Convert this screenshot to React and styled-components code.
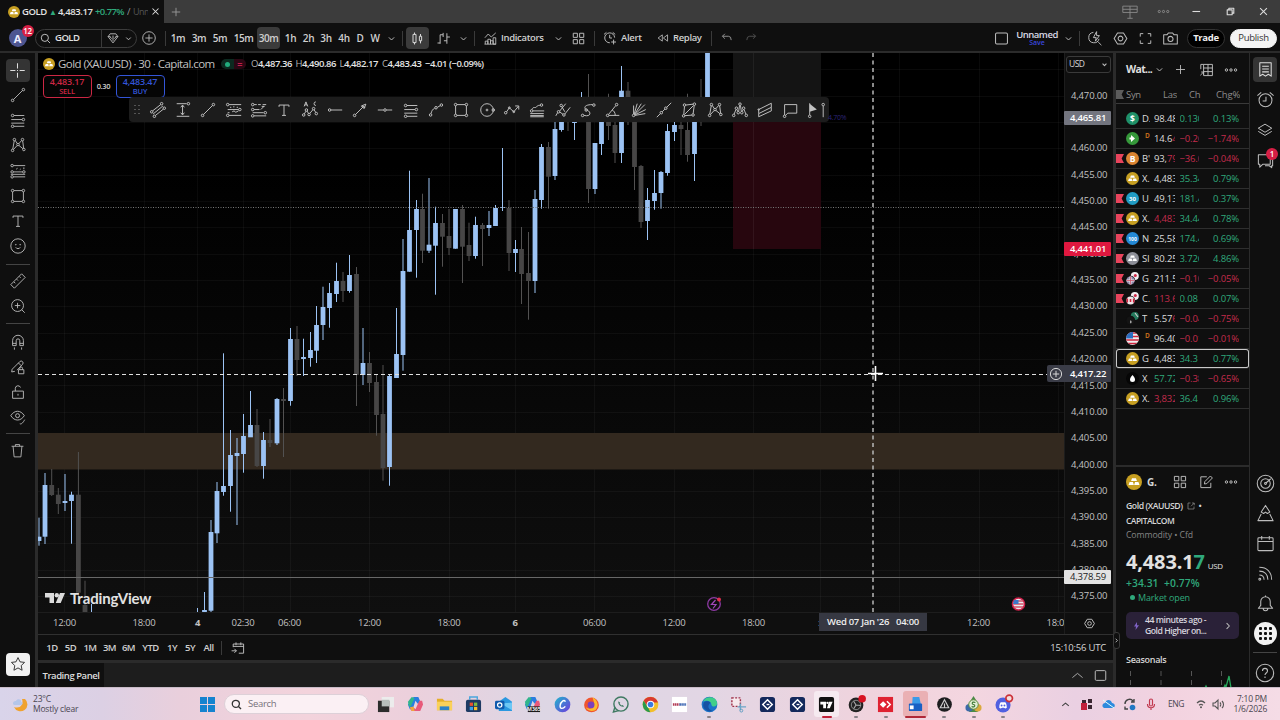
import React from "react";
import styled, { createGlobalStyle } from "styled-components";

const Global = createGlobalStyle`
  *, *::before, *::after { box-sizing: border-box; }
  body { margin: 0; background: #0f0f0f; overflow: hidden; }
`;

const UP = "#2fa97c";
const DOWN = "#c42c4d";

/* ---------- frame ---------- */
const Window = styled.div`
  width: 1280px; height: 720px; display: flex; flex-direction: column;
  background: #0f0f0f; color: #d6d6d6; overflow: hidden; white-space: nowrap;
  font-family: "Open Sans", "Noto Sans", sans-serif; font-size: 10px; line-height: 1;
`;
const TabBar = styled.div`
  height: 23px; display: flex; align-items: center; background: #3c3c3c; flex: none;
`;
const Tab = styled.div`
  width: 164px; height: 23px; background: #0f0f0f; display: flex; align-items: center;
  padding-left: 8px; font-size: 10px; font-weight: 600; color: #e2e2e2; flex: none;
`;
const Toolbar = styled.div`
  height: 28px; flex: none; display: flex; align-items: center; padding-top: 2px; background: #0f0f0f;
`;
const HRule = styled.div`height: ${p => p.$h || 1}px; background: ${p => p.$c || "#2b2b2b"}; flex: none;`;
const VRule = styled.div`width: 3px; background: #2b2b2b; flex: none;`;
const Body = styled.div`height: 634px; display: flex; flex: none;`;
const Cell = styled.div`
  width: ${p => p.$w}px; height: ${p => p.$h || 22}px; margin-left: ${p => p.$ml || 0}px; flex: none;
  display: flex; align-items: center; justify-content: ${p => p.$align || "center"};
  border-radius: 4px; background: ${p => (p.$on ? "#3b3b3b" : "transparent")};
  font-size: ${p => p.$fs || 10}px; font-weight: 600; letter-spacing: ${p => p.$ls ?? -0.3}px;
  color: ${p => p.$color || "#cfcfcf"};
`;
const Bar = styled.div`width: 1px; height: ${p => p.$h || 15}px; background: #3a3a3a; flex: none; margin-left: ${p => p.$ml || 0}px;`;
const Spacer = styled.div`flex: 1;`;
const Text = styled.span`
  font-size: ${p => p.$fs || 10}px; color: ${p => p.$c || "inherit"}; font-weight: ${p => p.$fw || "inherit"};
  letter-spacing: ${p => p.$ls ?? -0.2}px; margin-left: ${p => p.$ml || 0}px;
`;
const TabText = styled.span`
  width: ${p => p.$w}px; flex: none; overflow: hidden; color: ${p => p.$c || "inherit"}; font-weight: ${p => p.$fw || 600};
  font-size: ${p => p.$fs || 9.5}px; line-height: 14px; letter-spacing: ${p => p.$ls ?? -0.45}px;
`;
const Avatar = styled.div`
  width: 18px; height: 18px; border-radius: 50%; background: #4d5591; color: #eef; position: relative;
  display: flex; align-items: center; justify-content: center; font-size: 11px; font-weight: 700;
`;
const Badge = styled.span`
  position: absolute; right: ${p => p.$r}px; top: ${p => p.$t}px; width: 12px; height: 12px; border-radius: 50%;
  background: #d61f45; color: #fff; font-size: 8px; font-weight: 600; letter-spacing: -0.2px;
  display: flex; align-items: center; justify-content: center;
`;
const SearchPill = styled.div`
  width: 102px; height: 19px; border: 1px solid #3c3c3c; border-radius: 10px; display: flex; align-items: center;
`;
const Pill = styled.div`
  width: ${p => p.$w}px; height: 19px; border-radius: 10px; margin-left: ${p => p.$ml}px;
  display: flex; align-items: center; justify-content: center; font-size: 9.5px; letter-spacing: -0.3px;
  font-weight: ${p => (p.$light ? 500 : 700)};
  background: ${p => (p.$light ? "#f4f4f4" : "#000")}; color: ${p => (p.$light ? "#333" : "#eee")};
  border: 1px solid ${p => (p.$light ? "#f4f4f4" : "#333")};
`;
const LayoutName = styled.div`
  width: 46px; display: flex; flex-direction: column; align-items: center; font-size: 9.5px; font-weight: 600;
  letter-spacing: -0.5px; color: #d8d8e4;
  small { font-size: 7px; color: #3a46dc; line-height: 7px; letter-spacing: -0.1px; }
`;

/* ---------- icons ---------- */
const n = (x, y, r = 1.4) => `M${x - r} ${y}a${r} ${r} 0 1 0 ${2 * r} 0a${r} ${r} 0 1 0 ${-2 * r} 0`;
const Glyph = styled.svg`display: block; flex: none; overflow: visible;`;
function Icon({ name, s = 20, w = 1, c = "#bdbdbd" }) {
  return (
    <Glyph width={s} height={s} viewBox="0 0 20 20" fill="none" stroke={c} strokeWidth={w} strokeLinejoin="round">
      <path d={ICONS[name]} />
    </Glyph>
  );
}
const ICONS = {
  cross: "M10 1.5v6M10 12.5v6M1.5 10h6M12.5 10h6M9.4 10h1.2",
  line: n(4, 16) + n(16, 4) + "M5 15L15 5",
  fib: n(4, 5) + n(16, 9.5) + n(4, 17) + "M5.5 5H17M2.5 9.5h12M2.5 13.5H17M5.5 17H17",
  xabcd: n(4, 16) + n(6, 4) + n(10, 9.5) + n(15, 4) + n(16.5, 15) + "M4.2 14.6L5.8 5.4M7 5l2.2 3.4M11 8.5l3-3.5M15.2 5.4l1.1 8.2M5 15l4-4.4M11 10.5l4.5 3.6",
  forecast: n(3.5, 4) + n(3.5, 11) + n(16.5, 11) + n(3.5, 16.5) + "M5 4H18M5 11h10M5 16.500H18M2 13.700h16M8 8l1.500-1M12 8.500l1-.7M16.500 6v2",
  rect: n(4, 4) + n(16, 4) + n(4, 16) + n(16, 16) + "M5.4 4h9.2M5.4 16h9.2M4 5.4v9.2M16 5.4v9.2",
  text: "M4.5 6.5V4.5h11v2M10 4.5v11.5M7.8 16h4.4",
  smile: n(10, 10, 8) + n(7.6, 8.6, 0.4) + n(12.4, 8.6, 0.4) + "M7.5 11.5c.7 1.9 4.3 1.9 5 0",
  ruler: "M2 14L14 2l4 4L6 18zM5.5 11l1.5 1.5M8.5 8L10 9.5M11.5 5l1.5 1.5",
  zoomin: n(9.5, 9.5, 6.6) + "M9.5 6.5v6M6.5 9.5h6M14 14l3.5 3.5",
  magnet: "M4 14V8.5a6 6 0 0 1 12 0V14h-4V8.5a2 2 0 0 0-4 0V14zM4 11.5h4M12 11.5h4M6 16V18.5M14 16V18.5",
  pencillock: "M3 15.5l.5-3L12 4a1.8 1.8 0 0 1 3 3l-6 6.5M3 15.5l3.5-.7M10.5 5.5l3 3M10.5 13h6v4.5h-6zM12 13v-1.5a1.5 1.5 0 0 1 3 0V13",
  lock: "M4 9h12v8H4zM7 9V6a3 3 0 0 1 5.8-1M10 12v2",
  eye: "M2 8.5C6 2 13 2 17 8.5 13 15 6 15 2 8.5z" + n(9.5, 8.5, 2.2) + "M12 17.5c2 1 4-2 5.5-4.5",
  trash: "M3 5h14M7.5 5V3h5v2M4.8 5l1.2 12.5h8L15.2 5",
  star: "M10 2l2.5 5.3 5.7.7-4.2 4 1.1 5.8L10 14.9l-5.1 2.9L6 12 1.8 8l5.7-.7z",
  chev: "M6.5 8.5L10 12l3.5-3.5",
  up: "M4 12.5l6-5 6 5",
  right: "M8 6l4 4-4 4",
  plus: "M10 4v12M4 10h12",
  circplus: n(10, 10, 7) + "M10 6v8M6 10h8",
  x: "M6 6l8 8M14 6l-8 8",
  search: n(9, 9, 5.5) + "M13 13l4 4",
  diamond: "M3 8l3-4h8l3 4-7 9zM6 8.5l2 2.5M10 6.5V14M14 8.5l-2 2.5M3 8h3.5M13.5 8H17",
  candles: "M4 4.5h4v11H4zM6 4.5V2M6 15.5V18M12.5 7h3v6h-3zM14 7V4M14 13v3.5",
  bars: "M5.5 17V5M2 16H5.5M5.5 5h4V2.5M14.5 3v14M10.5 13H14.5M14.5 8h4M9.5 5v3",
  indicators: "M2.5 9l4.5-5 4 4 6-5.5M3 17.5v-4h3.5v4M6.5 17.5V11H10v6.5M10 17.5V13h3.5v4.5M13.5 17.5V9H17v8.5zM2 17.5h15.5",
  grid: "M3 3h5.5v5.5H3zM11.5 3H17v5.5h-5.5zM3 11.5h5.5V17H3zM11.5 11.5H17V17h-5.5z",
  alertplus: "M15.8 9.5a6.2 6.2 0 1 0-6 6.5M9.6 6v4H12.5M2.5 5.5L5.5 3M13.5 3l3 2.5M14.5 12v6M11.5 15h6",
  alarm: n(10, 10.8, 6.8) + "M10.5 7v4.5H7M1.5 6l4-3.5M18.5 6l-4-3.5",
  replay: "M9 5.5L3 10l6 4.5zM16.5 5.5l-6 4.5 6 4.5z",
  undo: "M7 4L3.5 7.5 7 11M3.5 7.5H12q4 0 4 5.5",
  redo: "M13 4l3.5 3.5L13 11M16.5 7.5H8q-4 0-4 5.5",
  square: "M4.5 3.5h11q1.5 0 1.5 1.5v10q0 1.5-1.5 1.5h-11Q3 16.5 3 15V5q0-1.5 1.5-1.5z",
  boltsearch: "M8 3a6.5 6.5 0 1 0 7 8M14 15l4 4M12 2L8 9.5h3.5L10.5 14l5-7H12z",
  gear: "M6.5 3.5h7L17.5 10l-4 6.5h-7L2.5 10z" + n(10, 10, 2.8),
  full: "M3 7.5V3.5h4M13 3.5h4v4M17 12.5v4h-4M7 16.5H3v-4",
  camera: "M2 5.5h4l1.5-2h5L14 5.5h4v11H2z" + n(10, 10.5, 3),
  chan: n(3, 12) + n(6, 17) + n(14, 3) + n(17, 8) + "M4 11l9-7M7.2 16L16 9M4.5 14.5L15.5 5.5",
  measure: "M3 3h11M3 17h14M9.5 5v10M7.5 7l2-2.5 2 2.5M7.5 13l2 2.5 2-2.5" + n(16, 3),
  longpos: n(3, 4) + n(3, 16) + n(16.5, 9.5) + "M4.5 4H18M3 9.5h12M4.5 16H18M3 13h2M8 12l2-1 2 1.5 3-1.5M5.5 7h1.5M9 6.5h1.5M13 7h1.5",
  fcst: n(3, 4) + n(3, 9.5) + n(17, 13) + n(3, 16.5) + "M4.5 4h3M9 4h3M14 4h4M4.5 9.5h6M12 9.5l4-4M4.5 16.5H18M3 13h12M13 6h3",
  wave: n(3, 15.5) + n(6, 10) + n(9, 15) + n(14, 8.5) + n(17, 14) + "M3.7 14.3L5.5 11.3M6.8 11.2L8.3 13.8M9.8 13.8L13.2 9.7M14.6 9.8L16.4 12.7M3.5 6L5.5 1l2 5M4.3 4.3h2.5M16.5 1a2 2 0 1 0 0 4",
  ray: n(4, 10) + "M5.5 10H18",
  arrow: n(4, 16) + "M5 15l9-9M11.5 5.5L16.5 3.5l-2 5zM12.5 5.5l2 2M13 4.8l2.5 2.5",
  hline: n(10, 10) + "M2 10h6.5M11.5 10H18",
  curve: n(4, 15.5) + n(10, 7.5) + n(16, 4.5) + "M4.5 14c.5-3 2-5 4-6M11.5 7l3-1.7",
  circle: n(10, 10, 7) + n(10, 10, 1) + n(17, 10),
  zig: n(3, 13) + "M4 12l3-4.5 5 4.5 5-6M13.5 5.5h4V9.5" + n(7, 7.5, 1) + n(12, 12, 1),
  flat: n(4, 11) + n(15, 4.5) + "M5.5 11H18M2.5 14h15M2.5 16.2h15M2.5 17.5h15M4.5 9.5c1-4 4-1 5-3s3-1.5 4-1.7",
  pitch: n(8, 5) + n(5, 12) + n(11, 15.5) + "M2 16.500L4 13M6.200 11.300L13 3M8.700 6.300L12 12M6.500 12.300l3.500 2.500M12 14.500L18 7",
  scurve: n(4, 16) + n(8, 10) + n(16.5, 4.5) + "M5.5 16c8 2 8-4 4-5.5S4 4 15 4",
  angle: n(4, 16) + n(14, 4) + "M5 15l8-9.8M5.5 16H17M9 10c2 .8 3.5 3 3.5 6",
  fan: n(4, 16) + "M4 14.5V5M4.7 14.5L8 3M5 15l7.5-12M5.5 15L16.5 4M5.5 15.5l12-6M5.5 16L17 14",
  ext: n(7, 13) + n(12, 8) + "M2 18l4-4M8 12l3-3M13 7l5-5",
  para: n(5, 4.5) + n(16, 3.5) + n(4, 16.5) + n(14.5, 15.5) + "M6.5 4.5l8-1M15.8 5l-1.2 9M13 15.7l-7.5.6M4.2 15L5 6M5 15L15 5",
  peaks: n(3, 16) + n(6, 8) + n(10, 3.5) + n(14, 8) + n(17, 16) + n(8, 13) + n(12, 13) + "M3.5 14.5l2-5M6.5 9.5l1 2M8.5 11.5l1-6.5M10.5 5l1 6.5M12.5 11.5l1-2M14.5 9.5l2 5",
  bands: "M3 9.5L17 2.5M17 2.5V7M3 9.5V14M3 14L17 7M17 7v4M3 14v3.5L17 11" + n(3, 9.5, 0.8),
  callout: n(4, 17) + "M4 15.5V4h13.5v9.5H7.5L5 16",
  dots: n(3.5, 10, 1.7) + n(10, 10, 1.7) + n(16.5, 10, 1.7),
  table: "M7 3h11v14H7zM7 7.5h11M7 12h11M12.5 3v14M3.5 9V3H7M7 12.5l-4 4M4 12.5h3v3.5",
  list: "M4 3h12v14l-3-2-3 2-3-2-3 2zM6.5 6.5h7M6.5 9.5h7M6.5 12.5h7",
  layers: "M10 3.5l7.5 4.5-7.5 4.5L2.5 8zM2.5 11.5l7.5 4.5 7.5-4.5",
  chat: "M2.5 4h12.5v10H7L4 17V14H2.5zM15 7.5h2.5V15.5h-1v2L14 15.5H9.5",
  target: n(10, 10, 8.7) + n(10, 10, 5) + n(10, 10, 1) + "M10.8 9.2L15.5 5",
  idea: "M10 1.5l4.5 7-2.5 1.5-2-1.5L8 10 5.5 8.5zM5.5 10.500L2 17.500h16L14.500 10.500",
  cal: "M3 4h14a1 1 0 0 1 1 1V16.5a1 1 0 0 1-1 1H3a1 1 0 0 1-1-1V5a1 1 0 0 1 1-1zM2 8h16M6 2v4M14 2v4",
  rss: n(4, 16, 1) + "M3.5 11.5c3 0 5 2 5 5M3.5 7.5c5.5 0 9 3.5 9 9M3.5 3.5c8 0 13 5 13 13",
  bell: "M2.5 15h15l-2.5-3V8a5 5 0 0 0-10 0V12zM7.5 15c0 3.5 5 3.5 5 0M10 3V1.5",
  help: n(10, 10, 8.7) + "M7.5 8c0-3.5 5-3.5 5 0 0 2-2.5 2-2.5 4M10 13.5v1.5",
  edit: "M11 3.5H3.5V17H16v-6M8 12.5l.5-3L15.5 2.5l2.5 2.5-7 7z",
  goto: "M4 9V5h13v11.5h-6M4 8h13M7.5 3v3.5M13.5 3v3.5M2 13.5h6M5.5 11l2.5 2.5L5.5 16",
  ext2: "M9 4H4v12h12v-5M12 4h4.5v4.5M16.5 4L10 10.5",
  panels: "M2 3.5h16v7H2zM10 3.5V17M7 17h6M2 7h16",
  restore: "M4 7h9v9H4zM7 7V4h9v9h-3",
  min: "M1 10h17",
};

const Gold = ({ s = 12, c = "#c79f22" }) => (
  <Glyph width={s} height={s} viewBox="0 0 12 12">
    <circle cx="6" cy="6" r="6" fill={c} />
    <path d="M4.5 3.2h3l.7 2H3.8zM2.7 6h2.5l.7 2.3H1.9zM6.8 6h2.5l.8 2.3h-4z" fill="#fff" />
  </Glyph>
);

/* ---------- left rail ---------- */
const Rail = styled.div`width: 35px; display: flex; flex-direction: column; align-items: center; flex: none; padding-top: 5px;`;
const RailItem = styled.div`
  height: ${p => p.$h || 25.3}px; width: 35px; display: flex; align-items: center; justify-content: center; flex: none;
`;
const RailOn = styled.div`
  width: 24px; height: 23px; border-radius: 4px; background: ${p => p.$bg || "#343434"};
  display: flex; align-items: center; justify-content: center;
`;
const RailRule = styled.div`width: 24px; height: 1px; background: #444; margin: ${p => p.$m || "4px 0"}; flex: none;`;

/* ---------- chart ---------- */
const Center = styled.div`width: 1075px; display: flex; flex-direction: column; flex: none;`;
const PlotRow = styled.div`display: flex; height: 559px; flex: none;`;
const Plot = styled.div`width: 1026px; height: 559px; position: relative; flex: none; overflow: hidden; background: linear-gradient(#000 20%, #0f0f0f);`;
const PlotSvg = styled.svg`position: absolute; inset: 0; display: block;`;
const Legend = styled.div`position: relative; display: flex; align-items: center; height: 14px; margin: 4px 0 0 5px;`;
const Title = styled.span`width: 157px; margin-left: 3px; flex: none; font-size: 11.5px; font-weight: 500; letter-spacing: -0.56px; color: #c2c2c2;`;
const Status = styled.div`
  width: 25px; height: 10px; margin: 0 5px 0 6px; border-radius: 5px; display: flex; align-items: center; justify-content: space-around;
  background: linear-gradient(90deg, #0c2a20 50%, #2b0714 50%); color: #c01f4c; font-size: 9px; font-weight: 700; flex: none;
  i { width: 5px; height: 5px; border-radius: 50%; background: #22ab7d; }
`;
const Ohlc = styled.span`
  width: ${p => p.$w}px; flex: none; font-size: 9.5px; font-weight: 600; letter-spacing: -0.48px; color: #e4e4e4;
  b { font-weight: 400; color: #b0b0b0; }
`;
const Quote = styled.div`position: relative; display: flex; align-items: center; margin: 4px 0 0 4.5px;`;
const QuoteBox = styled.div`
  width: 49px; height: 23px; border: 1px solid ${p => p.$c}; border-radius: 4px; background: #050505; color: ${p => p.$c};
  display: flex; flex-direction: column; align-items: center; padding-top: 1px;
  font-size: 9px; line-height: 10px; letter-spacing: -0.15px; font-weight: 600;
  small { font-size: 7.5px; line-height: 8px; letter-spacing: -0.2px; font-weight: 600; }
`;
const Spread = styled.span`width: 24px; text-align: center; font-size: 7.5px; color: #ccc; font-weight: 600; letter-spacing: -0.3px;`;
const Favs = styled.div`
  position: absolute; left: 91px; top: 44px; width: 700px; height: 25px; border-radius: 4px; background: #1c1c1c;
  display: flex; align-items: center;
`;
const FavCell = styled.div`width: ${p => p.$w || 25.32}px; display: flex; align-items: center; justify-content: center; flex: none;`;
const GripDots = styled.div`
  display: grid; grid-template-columns: 1.5px 1.5px; gap: 2.5px;
  i { width: 1.5px; height: 1.5px; background: #555; }
`;
const EntryNote = styled.span`position: absolute; left: 790px; top: 61px; font-size: 7px; color: #2c2478; letter-spacing: -0.3px;`;
const Brand = styled.div`
  position: absolute; left: 7px; top: 538px; display: flex; align-items: center; gap: 5px; color: #e2e2e2;
  font-family: "Lato", "Open Sans", sans-serif; font-size: 15px; font-weight: 700; letter-spacing: -0.15px;
`;
const PriceAxis = styled.div`width: 49px; position: relative; flex: none; border-left: 1px solid #1d1d1d; display: flex; flex-direction: column; padding-top: 29.3px;`;
const Tick = styled.div`height: 26.35px; display: flex; align-items: center; padding-left: 6px; font-size: 9.5px; letter-spacing: -0.15px; color: #c2c2c2; flex: none; font-weight: 500;`;
const Currency = styled.div`
  position: absolute; left: 1px; top: 3px; width: 45px; height: 17px; border: 1px solid #3a3a3a; border-radius: 3px;
  display: flex; align-items: center; justify-content: space-between; padding-left: 2px; font-size: 8.5px; letter-spacing: -0.5px; color: #d8d8d8;
`;
const PriceTag = styled.div`
  position: absolute; left: -1px; top: ${p => p.$y}px; width: 47px; height: ${p => p.$h || 14}px; padding-left: 6px; border-radius: 1px;
  background: ${p => p.$bg}; color: ${p => p.$c || "#fff"}; display: flex; align-items: center; font-size: 9.5px; letter-spacing: -0.2px; font-weight: ${p => p.$fw || 600};
`;
const AddMark = styled.div`
  position: absolute; left: -18px; top: 312px; width: 18px; height: 17px; background: #3a3c47; border-radius: 2px 0 0 2px;
  display: flex; align-items: center; justify-content: center;
`;
const TimeAxis = styled.div`height: 22px; position: relative; border-top: 1px solid #1d1d1d; display: flex; flex: none;`;
const TimeTrack = styled.div`width: 1026px; position: relative; overflow: hidden; flex: none;`;
const TimeTick = styled.span`
  position: absolute; left: ${p => p.$x - 38}px; top: 5px; transform: translateX(-50%); font-size: 9.5px; letter-spacing: -0.25px;
  color: #c2c2c2; font-weight: ${p => (p.$b ? 700 : 500)};
`;
const TimeTag = styled.div`
  position: absolute; left: 781px; top: 0; width: 108px; height: 18px; background: #363842; color: #eee;
  display: flex; align-items: center; justify-content: center; gap: 7px; font-size: 9.5px; font-weight: 600; letter-spacing: -0.3px;
`;
const AxisGear = styled.div`width: 49px; border-left: 1px solid #1d1d1d; display: flex; align-items: center; justify-content: center;`;
const RangeRow = styled.div`height: 25px; display: flex; align-items: center; flex: none; padding: 0 7px 0 5px;`;
const PanelRow = styled.div`height: 24px; display: flex; align-items: center; background: #1d1d1d; flex: none; padding-right: 1px;`;
const PanelTab = styled.div`
  width: 66px; height: 24px; background: #0f0f0f; display: flex; align-items: center; justify-content: center;
  font-size: 9.5px; font-weight: 600; letter-spacing: -0.45px; color: #ddd; padding-top: 1px;
`;

/* x, body top, body bottom, high, low, rising */
const CANDLES = [
  [39, 536.7, 541, 517.7, 545.7, 1], [45, 485, 536.7, 473, 544, 1], [51.7, 485, 495, 469, 496, 0], [58.3, 494.7, 504, 488, 514, 0],
  [65, 501, 503, 474, 511, 1], [71.5, 494.7, 501, 491.7, 543.7, 1], [78.4, 494.7, 592.7, 452, 603, 0], [85, 605, 613, 580.7, 613, 0],
  [91.5, 613, 613, 604, 613, 1], [197.5, 613, 613, 608, 613, 1], [204.5, 610, 613, 592, 613, 1], [211, 532, 610.7, 520, 612, 1],
  [217, 491, 533.3, 482, 543, 1], [223.5, 486, 492, 353.3, 495.7, 1], [230.5, 455, 486, 430, 511.7, 1], [237, 453, 456, 438, 525, 1],
  [243.5, 436, 454, 414, 472.7, 1], [250.5, 425, 437.3, 391, 437, 1], [257, 425, 466, 409, 467, 0], [263.5, 440, 466, 432, 478.7, 1],
  [270, 440, 443, 419, 447, 0], [277, 399, 443.3, 398, 445, 1], [283.5, 399, 401, 388, 457, 0], [290.5, 339, 401, 328, 405.7, 1],
  [297, 339, 360, 326, 376, 0], [303.5, 357, 359, 338.7, 376, 1], [310.5, 350, 358, 332, 366.7, 1], [316.5, 325, 350.7, 306, 363, 1],
  [323, 307, 325, 286.7, 340, 1], [329.5, 293, 308, 283, 327.7, 1], [336.5, 281, 294, 262.7, 302, 1], [343, 281, 291, 272, 302, 0],
  [349.5, 275, 291, 255, 292.7, 1], [356.5, 274, 375, 267, 406, 0], [363, 363, 375, 328, 385, 1], [369.5, 363, 383, 352, 392, 0],
  [376.5, 382, 415, 375, 435.7, 0], [383, 414, 468, 365, 480.7, 0], [389.5, 376, 467, 374, 485.7, 1], [396.5, 354, 378, 308, 378, 1],
  [403, 271, 355, 239, 370.7, 1], [409.5, 230, 271.7, 170.7, 271.7, 1], [416.5, 209, 230, 200, 277.7, 1], [422.5, 209, 250.7, 193.7, 263, 0],
  [429, 244.7, 250.7, 178, 253, 1], [435.5, 223, 245.7, 206.7, 294.7, 1], [442.5, 223, 236.7, 214, 266.7, 0], [449, 236, 248, 209, 255, 0],
  [455.5, 209, 248.7, 209, 248.7, 1], [462.5, 209, 246.7, 205, 283, 0], [469, 245, 256, 222.7, 261, 0], [475.5, 225, 256, 216.7, 258.7, 1],
  [482.5, 225, 229, 223, 266, 0], [489, 225, 228, 211, 236, 1], [495.5, 208, 226, 205, 226, 1], [502.5, 207, 208, 148, 211, 1],
  [509, 208, 253, 200, 271, 0], [515.5, 249, 253, 240, 272, 1], [521.5, 249, 274, 227, 304, 0], [528.5, 273, 281, 232, 319.7, 0],
  [535, 199, 281, 190, 293, 1], [541.5, 147, 200, 144, 208.7, 1], [548.5, 147, 176.7, 142, 208.7, 0], [555, 129, 176, 122, 180, 1],
  [561.5, 105, 130, 105, 131.7, 1], [568, 105, 112, 105, 131, 0], [574.5, 105, 123, 105, 140, 1], [581.5, 105, 110, 92, 112, 1],
  [588.5, 105, 189, 74, 203, 0], [595, 143, 189, 143, 194, 1], [601.5, 110, 144, 110, 155, 1], [608.5, 110, 126, 93.7, 140, 0],
  [615, 125, 153, 115, 163, 0], [621.5, 90.7, 153, 66, 163, 1], [628, 90.7, 115, 82, 125, 0], [634.5, 110, 167, 110, 190, 0],
  [641, 166, 222, 165, 228, 0], [647.5, 200, 221, 188, 240, 1], [654.5, 193, 201, 170, 209.7, 1], [661, 172, 193, 171, 208.7, 1],
  [667.5, 131, 173, 124, 175.7, 1], [674.5, 125, 132, 120, 141, 1], [681, 125, 129, 120, 155, 0], [687.5, 130, 155, 93.7, 161.7, 0],
  [694.5, 110, 154, 110, 181, 1], [701, 110, 112, 79, 126, 0], [707.5, 53, 114, 53, 114, 1],
];
const GRID_X = [64.5, 144, 197.5, 243, 290, 369.5, 449, 515, 594.5, 674, 753.5, 820, 899, 979, 1058];
const PRICES = Array.from({ length: 20 }, (_, i) => 4470 - i * 5);
const money = v => `4,${v - 4000}.00`;

function Chart() {
  return (
    <PlotSvg width="1026" height="559" viewBox="38 53 1026 559">
      <g stroke="#fff" strokeOpacity="0.04">
        {GRID_X.map(x => <path key={x} d={`M${Math.floor(x) + 0.5} 53V612`} />)}
        {[-1, ...PRICES.keys()].map(i => <path key={i} d={`M38 ${Math.round(95.5 + i * 26.35) + 0.5}H1064`} />)}
      </g>
      <rect x="733" y="53" width="88" height="67" fill="#141414" />
      <rect x="733" y="120" width="88" height="129" fill="#27060e" />
      <path d="M753.5 53V249" stroke="#fff" strokeOpacity="0.06" />
      <rect x="38" y="433" width="1026" height="36.5" fill="#33291f" />
      {CANDLES.map(([x, t, b, h, l, up]) => (
        <g key={x} fill={up ? "#9cc3f4" : "#474646"}>
          <rect x={x - 0.5} y={h} width="1" height={l - h} fill={up ? "#9cc3f4" : "#525151"} />
          <rect x={x - 2.4} y={t} width="4.8" height={b - t} />
        </g>
      ))}
      <path d="M38 207.5H1064" stroke="#777" strokeDasharray="1 1.5" />
      <path d="M38 577.5H1064" stroke="#686868" />
      <path d="M38 374.5H1064" stroke="#e0e0e0" strokeDasharray="4 3" />
      <path d="M873 53V612" stroke="#b8b8b8" strokeWidth="1.5" strokeDasharray="4 3.5" />
      <path d="M875.5 366v15M868 373.5h15" stroke="#fff" strokeWidth="1.6" />
      <circle cx="714" cy="604" r="6.3" fill="none" stroke="#8d3aa3" strokeWidth="1.3" />
      <path d="M715.5 600l-4 4.5h4.5l-3 4" fill="none" stroke="#a048b8" strokeWidth="1.2" />
      <circle cx="719" cy="599.5" r="2" fill="#e0304f" />
      <circle cx="1018.5" cy="604" r="6" fill="#e9e9ef" stroke="#d0204a" strokeWidth="1.6" />
      <path d="M1013.5 604h10M1014 607h9M1018 601h5" stroke="#d3546a" strokeWidth="1.3" />
      <path d="M1014 600h4.5v4h-5.5z" fill="#3b78c8" />
    </PlotSvg>
  );
}

function FlagMeasure() {
  return (
    <Glyph width="18" height="18" viewBox="0 0 20 20" fill="none" stroke="#c2c2c2" strokeWidth="1.05">
      <path d={n(3, 17) + "M3 15.5V2.5"} />
      <path d="M3 3l8 6.5L3 12z" fill="#c2c2c2" stroke="none" />
      <path d={n(18, 4) + "M18 5.5V18"} />
    </Glyph>
  );
}
const FAVS = ["chan", "measure", "line", "longpos", "fcst", "text", "wave", "ray", "arrow", "hline", "fib", "curve", "rect", "circle", "zig", "flat", "pitch", "scurve", "angle", "fan", "ext", "para", "xabcd", "peaks", "bands", "callout"];
const TIMES = [[64.5, "12:00"], [144, "18:00"], [197.5, "4", 1], [243, "02:30"], [289.5, "06:00"], [369.5, "12:00"], [449, "18:00"], [515, "6", 1], [594.5, "06:00"], [674, "12:00"], [753.5, "18:00"], [819, ":"], [978.5, "12:00"], [1058, "18:00"]];
const RANGES = [["1D", 18], ["5D", 19], ["1M", 20], ["3M", 19], ["6M", 19], ["YTD", 25], ["1Y", 18], ["5Y", 18], ["All", 19]];

/* ---------- right panel ---------- */
const Side = styled.div`width: 133px; display: flex; flex-direction: column; flex: none; position: relative;`;
const SideHead = styled.div`height: 33px; display: flex; align-items: center; padding-left: 10px; flex: none;`;
const ListName = styled.span`width: 24px; font-size: 10.5px; font-weight: 700; letter-spacing: -0.65px; color: #dedede;`;
const Cols = styled.div`height: 18px; display: flex; align-items: center; border-bottom: 1px solid #3a3a3a; margin-bottom: 5px; color: #8c8c8c; font-size: 9.5px; letter-spacing: -0.3px; flex: none;`;
const Row = styled.div`
  height: 20px; display: flex; align-items: center; flex: none;
  border-bottom: 1px solid #2e2e2e; box-shadow: ${p => (p.$on ? "0 0 0 1px #c9c9c9 inset" : "none")}; border-radius: ${p => (p.$on ? 3 : 0)}px;
`;
const FlagMark = styled.div`
  width: 8px; height: 9px; margin-right: 2px; flex: none; background: ${p => p.$c};
  clip-path: polygon(0 0, 100% 0, 70% 50%, 100% 100%, 0 100%);
`;
const Clip = styled.div`
  width: ${p => p.$w}px; margin-left: ${p => p.$ml}px; overflow: hidden; flex: none; font-size: 9.5px; line-height: 14px; height: 14px;
  letter-spacing: ${p => p.$ls ?? -0.15}px; color: ${p => p.$c || "#dcdcdc"}; text-align: ${p => p.$a || "left"}; font-weight: ${p => p.$fw || 500};
`;
const Tail = styled.span`color: ${p => p.$c || "inherit"};`;
const Delay = styled.span`display: block; color: #c06a1c; font-size: 6.5px; line-height: 8px; margin-left: 3px; font-weight: 700;`;
const Detail = styled.div`padding: 3px 10px 0; display: flex; flex-direction: column; height: 220px; overflow: hidden;`;
const Line = styled.div`
  display: flex; align-items: center; height: ${p => p.$h}px; margin-top: ${p => p.$mt || 0}px; font-size: ${p => p.$fs || 9}px; color: ${p => p.$c || "#d6d6d6"};
  font-weight: ${p => p.$fw || 500}; letter-spacing: ${p => p.$ls ?? -0.3}px; gap: ${p => p.$gap ?? 3}px; flex: none;
`;
const DetailSymbol = styled.span`width: 10px; margin-left: 5px; font-size: 10px; font-weight: 700;`;
const Unit = styled.span`font-size: 8px; font-weight: 500; letter-spacing: -0.4px; padding-top: 8px;`;
const OpenDot = styled.i`width: 5px; height: 5px; border-radius: 50%; background: ${UP}; margin-left: 4px;`;
const News = styled.div`
  margin-top: 5px; width: 113px; height: 27px; flex: none; border-radius: 5px; background: #2a2138; display: flex; align-items: center; padding-left: 8px;
  p { margin: 0 0 0 6px; font-size: 8.7px; line-height: 10.5px; font-weight: 600; letter-spacing: -0.5px; width: 76px; color: #d5d2dc; }
`;
const Handle = styled.div`
  position: absolute; left: -3px; top: 579px; width: 7px; height: 17px; border: 1px solid #3a3a3a; border-radius: 3px; background: #0f0f0f;
  display: flex; align-items: center; justify-content: center;
`;
const RightRail = styled.div`width: 31px; border-left: 1px solid #2b2b2b; display: flex; flex-direction: column; align-items: center; flex: none; padding-top: 2px;`;
const RailBtn = styled.div`
  position: relative; width: 24px; height: ${p => p.$h || 24}px; margin-top: ${p => p.$mt || 0}px; border-radius: 4px; flex: none;
  background: ${p => (p.$on ? "#343434" : "transparent")}; display: flex; align-items: center; justify-content: center;
`;
const Apps = styled.div`
  width: 23px; height: 23px; border-radius: 50%; background: #f2f2f2; display: grid; grid-template-columns: repeat(3, 3px);
  gap: 2px; place-content: center; flex: none; i { width: 3px; height: 3px; background: #111; border-radius: 1px; }
`;

const Coin = ({ kind }) => {
  if (kind === "gold") return <Gold s={13} />;
  if (kind === "silver") return <Gold s={13} c="#8d8f98" />;
  const fills = { usd: "#1f9169", green: "#35983a", btc: "#db8432", n30: "#219cc4", n100: "#2489d6" };
  if (fills[kind]) return (
    <Glyph width="13" height="13" viewBox="0 0 13 13">
      <circle cx="6.5" cy="6.5" r="6.5" fill={fills[kind]} />
      {kind === "green"
        ? <path d="M5 3l4 3.5L5 10V7.5H3.5v-2H5z" fill="#fff" />
        : <text x="6.5" y={kind === "n100" || kind === "n30" ? 8.6 : 9.5} fontSize={kind === "n100" ? 5 : kind === "n30" ? 6 : 8.5} fontWeight="700" letterSpacing="0" textAnchor="middle" fill="#fff">{{ usd: "$", btc: "B", n30: "30", n100: "100" }[kind]}</text>}
    </Glyph>
  );
  if (kind === "us") return (
    <Glyph width="13" height="13" viewBox="0 0 13 13">
      <clipPath id="us"><circle cx="6.5" cy="6.5" r="6.5" /></clipPath>
      <g clipPath="url(#us)"><rect width="13" height="13" fill="#eee" /><path d="M0 1h13M0 4.5h13M0 8h13M0 11.5h13" stroke="#d0243f" strokeWidth="1.7" /><rect width="7" height="6.5" fill="#2b6fc2" /></g>
    </Glyph>
  );
  if (kind === "oil") return (
    <Glyph width="13" height="13" viewBox="0 0 13 13"><circle cx="6.5" cy="6.5" r="6.5" fill="#060606" /><path d="M6.5 3c2 2.5 2.5 3.5 2.5 4.6a2.5 2.5 0 0 1-5 0C4 6.5 4.5 5.5 6.5 3z" fill="#fff" /></Glyph>
  );
  const dark = kind === "tn";
  return (
    <Glyph width="13" height="13" viewBox="0 0 13 13">
      <circle cx="8.8" cy="4" r="4" fill={dark ? "#247a5d" : "#f2eef0"} />
      {!dark && <circle cx="9.3" cy="3.5" r="1.5" fill="#cf2a48" />}
      <circle cx="4.5" cy="8.3" r="4.6" fill="#0f0f0f" />
      <circle cx="4.5" cy="8.5" r="4" fill={dark ? "#141414" : kind === "gb" ? "#8d86a8" : "#f0e8ea"} />
      {kind === "gb" && <path d="M4.5 4.5v8M.5 8.5h8" stroke="#f0e4ea" strokeWidth="2" />}
      {kind === "gb" && <path d="M4.5 4.5v8M.5 8.5h8" stroke="#c8506a" strokeWidth="0.8" />}
      {kind === "ca" && <path d="M1.3 6.5v4M7.7 6.5v4M4.5 7v3" stroke="#d0243f" strokeWidth="1.6" />}
      {dark && <path d="M4.5 8.5a2 2 0 0 1 0 2.5M9 1l3 4" stroke="#c9c9c9" strokeWidth="1.2" fill="none" />}
    </Glyph>
  );
};
/* flagged, coin, symbol, delayed, last, last tail, change, percent, rising, last colour, tail colour */
const ROWS = [
  [0, "usd", "D.", 0, "98.4", "8", "0.130", "0.13%", 1],
  [0, "green", "", 1, "14.6", "4", "−0.26", "−1.74%", 0, "", DOWN],
  [1, "btc", "B'", 0, "93,", "79", "−36.0", "−0.04%", 0, "", DOWN],
  [0, "gold", "X.", 0, "4,48", "3", "35.34", "0.79%", 1],
  [1, "n30", "U", 0, "49,1", "3", "181.4", "0.37%", 1],
  [1, "gold", "X.", 0, "4,48", "3", "34.44", "0.78%", 1, DOWN],
  [1, "n100", "N", 0, "25,5", "8", "174.4", "0.69%", 1],
  [1, "silver", "SI", 0, "80.2", "5", "3.726", "4.86%", 1],
  [1, "gb", "G", 0, "211.", "5", "−0.10", "−0.05%", 0],
  [1, "ca", "C.", 0, "113.", "6", "0.08", "0.07%", 1, DOWN],
  [0, "tn", "T", 0, "5.57", "6", "−0.04", "−0.75%", 0, "", DOWN],
  [0, "us", "", 1, "96.4", "0", "−0.01", "−0.01%", 0],
  [0, "gold", "G", 0, "4,48", "3", "34.3", "0.77%", 1],
  [0, "oil", "X", 0, "57.7", "2", "−0.38", "−0.65%", 0, UP],
  [0, "gold", "X.", 0, "3,83", "2", "36.4", "0.96%", 1, DOWN],
];

/* ---------- taskbar ---------- */
const Taskbar = styled.div`
  height: 33px; flex: none; display: flex; align-items: center; color: #4a4650; border-top: 1px solid #c9bcc8;
  background: linear-gradient(90deg, #d9d4ea 0, #dcd0e4 8%, #e9cfdc 14%, #f3d3dc 24%, #ecd0dc 32%, #ddd6e4 42%, #e2d6e4 55%, #f0d3dd 68%, #f4d6e0 76%, #ead0e2 84%, #f3d3e0 92%, #f5dce6 100%);
`;
const Weather = styled.div`width: 187px; padding-left: 12px; display: flex; align-items: center; gap: 5px; font-size: 8.5px; line-height: 10.5px; letter-spacing: -0.2px; margin-right: 8px; flex: none;`;
const TaskSearch = styled.div`
  width: 145px; height: 20px; margin: 0 2px 0 5px; border-radius: 10px; background: #fbf0f4; border: 1px solid #ddd0d8; flex: none;
  display: flex; align-items: center; padding-left: 5px; gap: 5px; font-size: 9.5px; letter-spacing: -0.3px; color: #77707a;
`;
const AppSlot = styled.div`
  width: 29.41px; height: 28px; flex: none; display: flex; flex-direction: column; align-items: center; justify-content: center; position: relative;
  &::after { content: ""; position: absolute; bottom: 0; height: 2px; border-radius: 1px; width: ${p => p.$uw || 0}px; background: ${p => p.$u || "transparent"}; }
`;
const AppTile = styled.div`
  width: 25px; height: 26px; border-radius: 3px; background: ${p => p.$bg || "transparent"}; display: flex; align-items: center; justify-content: center;
`;
const Tray = styled.div`width: ${p => p.$w}px; display: flex; align-items: center; justify-content: center; font-size: 8.5px; letter-spacing: -0.4px; flex: none;`;
const ClockBox = styled.div`width: 54px; padding-right: 13px; text-align: right; font-size: 8.5px; line-height: 10.5px; letter-spacing: -0.25px; flex: none;`;

const APP_ART = {
  task: <><rect x="5" y="1" width="13" height="11" fill="#ececec" /><rect x="1" y="5" width="12" height="12" fill="#2c2c2c" /><rect x="5" y="4" width="8" height="7" fill="#b7bebc" /></>,
  copilot: <><path d="M7 1h5l3 7h-4L9 5 6 14H3L1 9z" fill="#2a7de0" /><path d="M1 6l4-5 3 1-4 9H2z" fill="#31b58c" /><path d="M9 14l4-9h3l1 4-3 7H5l-2-3h5z" fill="#e8597a" /><path d="M3 12l4-1 1 5H5z" fill="#f0a63c" /></>,
  folder: <><path d="M1 3h6l2 2h8v10H1z" fill="#e5ae27" /><rect x="1" y="6" width="16" height="9" fill="#fad15a" /><rect x="4" y="11" width="10" height="4" fill="#2d83c8" /></>,
  store: <><rect x="1" y="4" width="16" height="13" rx="2" fill="#1e3a63" /><path d="M5 4V1h8v3" fill="none" stroke="#4aa6dd" strokeWidth="1.5" /><path d="M5 7h3.5v3.5H5z" fill="#e85030" /><path d="M9.5 7H13v3.5H9.5z" fill="#7cba42" /><path d="M5 11.5h3.5V15H5z" fill="#3aa0e8" /><path d="M9.5 11.5H13V15H9.5z" fill="#f5bd2c" /></>,
  outlook: <><path d="M4 6l7-5 7 5v10H4z" fill="#2b98e0" /><path d="M6 8l12 7V7z" fill="#6cc7f4" /><rect x="0" y="5" width="10" height="9" rx="1.5" fill="#0f5aad" /><circle cx="5" cy="9.5" r="2.3" fill="none" stroke="#fff" strokeWidth="1.3" /></>,
  canva: <><defs><linearGradient id="cv" x1="0" y1="0" x2="1" y2="1"><stop offset="0" stopColor="#1fb8cc" /><stop offset="1" stopColor="#7037dc" /></linearGradient></defs><circle cx="9" cy="9" r="8.3" fill="url(#cv)" /><path d="M12 6c-1-3-5 0-5.500 4s3 4 5.500 1" fill="none" stroke="#fff" strokeWidth="1.5" /></>,
  firefox: <><circle cx="9" cy="9.5" r="7.8" fill="#f0552e" /><path d="M10 1c5 3 8 9 3 14-5 2-9 0-10-3 4 3 9 1 9-4z" fill="#fbb92e" /><circle cx="8.5" cy="9.5" r="3.6" fill="#7b40bd" /></>,
  whatsapp: <><circle cx="9.5" cy="8.5" r="7.5" fill="none" stroke="#3f7a62" strokeWidth="1.5" /><path d="M3 12L1.5 17 7 15.5" fill="none" stroke="#3f7a62" strokeWidth="1.5" /><path d="M6.8 5.5c-1 3 3 7 6 5.5l-1.5-1.5-1.2.6-2-2 .6-1z" fill="#3f7a62" /></>,
  chrome: <><circle cx="9" cy="9" r="8.3" fill="#f3bf2a" /><path d="M1.8 5a8.3 8.3 0 0 1 15 2H9L6 11z" fill="#d93a30" /><path d="M1.8 5l5 8 2 4.3A8.3 8.3 0 0 1 1.8 5z" fill="#2a9a4c" /><circle cx="9" cy="9" r="4" fill="#fff" /><circle cx="9" cy="9" r="3" fill="#3a7be0" /></>,
  white: <><rect x="1" y="1" width="16" height="16" fill="#fff" /><path d="M2 9h7" stroke="#b33a55" strokeWidth="2.5" strokeDasharray="1.5 .5" /><path d="M9 9h7" stroke="#3560b0" strokeWidth="2.5" strokeDasharray="1.5 .5" /></>,
  edge: <><circle cx="9" cy="9" r="8.3" fill="#1b74c9" /><path d="M2 6C5-1 17 0 17 8c0 4-6 4-6 1 0-4-6-5-9-3z" fill="#41cf8a" /><path d="M3 7c-3 6 4 11 10 9-5-1-7-5-3-9-2-2-5-2-7 0z" fill="#1552a4" /></>,
  snip: <><path d="M2 2h9v9H2z" fill="#f6e8ec" stroke="#a03048" strokeWidth="1.5" strokeDasharray="2 1.5" /><path d="M11 8v7M8 11.5h9" stroke="#6aa5c8" strokeWidth="1.5" /><circle cx="12" cy="15.5" r="1.5" fill="none" stroke="#5f9cc0" /></>,
  blue: <><rect x="1" y="1" width="16" height="16" rx="3" fill="#14295c" /><path d="M9 4l5 5-5 5-5-5z" fill="none" stroke="#fff" strokeWidth="1.6" /><path d="M8 9h3" stroke="#fff" strokeWidth="1.4" /></>,
  tv: <><rect x="1" y="1" width="16" height="16" rx="2" fill="#111" /><path d="M2.5 6h6v7H5.5V9h-3zM11.5 6H15.5l-3 7H9.5z" fill="#fff" /><circle cx="10" cy="7.3" r="1.2" fill="#fff" /></>,
  obs: <><circle cx="8.5" cy="9.5" r="7.8" fill="#222" /><circle cx="8.5" cy="9.5" r="5" fill="none" stroke="#8c8c8c" strokeWidth="1" /><path d="M8.5 9.5L6 5.5M8.5 9.5l5 .5M8.5 9.5L6 13.5" stroke="#aaa" strokeWidth="1.2" /><circle cx="15" cy="3" r="4" fill="#d81222" /></>,
  red: <><rect x="1" y="1" width="16" height="16" fill="#df2232" /><path d="M6.5 5.5L10 9l-3.5 3.5L3 9z" fill="#fff" /><path d="M10.5 5.5L14 9l-3.5 3.5" fill="none" stroke="#fff" strokeWidth="1.6" /></>,
  phone: <><path d="M6 1h7l3 14H5z" fill="#3b9be8" /><rect x="2" y="8" width="14" height="8" rx="1" fill="#1860c4" /><rect x="3" y="10" width="4" height="4" fill="#fff" /></>,
  arc: <><circle cx="9" cy="9" r="7.8" fill="#1d1d1f" /><path d="M9 4l4.5 8.5h-9zM9 8v4" fill="none" stroke="#ccc" strokeWidth="1.2" /></>,
  money: <><path d="M9 0l8 13-4 4H5l-4-4z" fill="#4b8a46" /><circle cx="4.5" cy="12.5" r="4" fill="#3c6aa8" /><circle cx="13.5" cy="12.5" r="4" fill="#dba93c" /><circle cx="9" cy="9" r="5" fill="#e0ecd2" stroke="#5b8c3c" /><path d="M11 7c-4-2-4 2-2 2s2 4-2 2" fill="none" stroke="#407b35" strokeWidth="1.2" /></>,
  discord: <><circle cx="8.5" cy="9.5" r="8" fill="#5160e0" /><path d="M4.5 12.5c0-4 1-6 2-6h4c1 0 2 2 2 6-2 1.5-2 0-4 0s-2 1.5-4 0z" fill="#fff" /><circle cx="7" cy="10" r="1" fill="#5160e0" /><circle cx="10" cy="10" r="1" fill="#5160e0" /><circle cx="15" cy="2.5" r="3.5" fill="#f3dcdc" stroke="#cc3038" strokeWidth="1.8" /></>,
};
APP_ART.pre = <>{APP_ART.copilot}<rect x="4" y="11" width="13" height="6" fill="#1a1a1a" /><text x="10.5" y="16" fontSize="5.5" fontWeight="700" fill="#eee" letterSpacing="0" textAnchor="middle">M365</text></>;
const APPS = [["task"], ["copilot"], ["folder"], ["store"], ["outlook"], ["pre"], ["canva"], ["firefox"], ["whatsapp"], ["chrome"], ["white"], ["edge", 4], ["snip"], ["blue"], ["blue"], ["tv", 10, "#f6eaf0", "#c02038"], ["obs", 4], ["red", 4], ["phone", 21, "#eab0b4", "#b02838"], ["arc", 4], ["money", 4], ["discord", 4]];

export default function App() {
  return (
    <Window>
      <Global />
      <TabBar>
        <Tab>
          <Gold />
          <Cell $w={2} /><TabText $w={27}>GOLD</TabText><TabText $w={9} $c={UP} $fs={8}>▲</TabText>
          <TabText $w={37} $ls={-0.4}>4,483.17</TabText><TabText $w={32} $c={UP} $ls={-0.6}>+0.77%</TabText>
          <TabText $w={6} $fw={400} $c="#999">/</TabText><TabText $w={15} $fw={400} $c="#555" $fs={9} $ls={-0.5}>Unn</TabText>
          <Icon name="x" s={15} c="#ddd" w={1.4} />
        </Tab>
        <Cell $w={24}><Icon name="plus" s={14} c="#999" w={1.3} /></Cell>
        <Spacer />
        <Cell $w={32}><Icon name="panels" s={18} c="#8a8a8a" /></Cell>
        <Cell $w={34}><Icon name="dots" s={13} c="#999" w={1.2} /></Cell>
        <Cell $w={33}><Icon name="min" s={9} c="#ddd" w={2.4} /></Cell>
        <Cell $w={34}><Icon name="restore" s={11} c="#ddd" w={2} /></Cell>
        <Cell $w={33}><Icon name="x" s={17} c="#ddd" w={1.2} /></Cell>
      </TabBar>
      <Toolbar>
        <Cell $w={35}><Avatar>A<Badge $r={-7} $t={-4}>12</Badge></Avatar></Cell>
        <SearchPill>
          <Cell $w={19}><Icon name="search" s={13} w={1.5} /></Cell>
          <Cell $w={46} $align="flex-start" $color="#e2e2e2" $fs={9.5} $ls={-0.5}>GOLD</Cell>
          <Bar $h={17} /><Cell $w={22}><Icon name="diamond" s={14} w={1.3} /></Cell><Cell $w={8}><Icon name="chev" s={13} w={1.5} /></Cell>
        </SearchPill>
        <Cell $w={24}><Icon name="circplus" s={18} /></Cell>
        <Bar $ml={4} />
        <Cell $w={22} $ml={1}>1m</Cell><Cell $w={20}>3m</Cell><Cell $w={22}>5m</Cell><Cell $w={25} $ls={-0.5}>15m</Cell>
        <Cell $w={23} $ml={1} $ls={-0.5} $on>30m</Cell><Cell $w={19} $ml={1}>1h</Cell><Cell $w={17}>2h</Cell><Cell $w={18}>3h</Cell>
        <Cell $w={18}>4h</Cell><Cell $w={14}>D</Cell><Cell $w={16}>W</Cell><Cell $w={16}><Icon name="chev" s={15} w={1.3} /></Cell>
        <Bar $ml={3} />
        <Cell $w={23} $ml={3} $on><Icon name="candles" s={15} w={1.3} c="#ddd" /></Cell>
        <Cell $w={24} $ml={2}><Icon name="bars" s={15} w={1.3} /></Cell>
        <Cell $w={16}><Icon name="chev" s={15} w={1.3} /></Cell>
        <Bar $ml={3} />
        <Cell $w={16} $ml={7}><Icon name="indicators" s={15} w={1.2} /></Cell>
        <Cell $w={49} $ml={3} $align="flex-start" $fs={9.5} $ls={-0.35}>Indicators</Cell>
        <Cell $w={16}><Icon name="chev" s={15} w={1.3} /></Cell>
        <Cell $w={19} $ml={3}><Icon name="grid" s={15} w={1.3} /></Cell>
        <Bar $ml={6} />
        <Cell $w={16} $ml={7}><Icon name="alertplus" s={16} w={1.2} /></Cell>
        <Cell $w={31} $ml={3} $align="flex-start" $fs={9.5} $ls={-0.3}>Alert</Cell>
        <Cell $w={16} $ml={3}><Icon name="replay" s={14} w={1.2} /></Cell>
        <Cell $w={34} $ml={2} $align="flex-start" $fs={9.5} $ls={-0.35}>Replay</Cell>
        <Bar $ml={4} />
        <Cell $w={18} $ml={6}><Icon name="undo" s={14} w={1.3} c="#999" /></Cell>
        <Cell $w={18} $ml={6}><Icon name="redo" s={14} w={1.3} c="#555" /></Cell>
        <Spacer />
        <Cell $w={16}><Icon name="square" s={17} w={1.2} /></Cell>
        <Cell $w={5} />
        <LayoutName>Unnamed<small>Save</small></LayoutName>
        <Cell $w={16}><Icon name="chev" s={15} w={1.3} /></Cell>
        <Bar $ml={3} />
        <Cell $w={19} $ml={5}><Icon name="boltsearch" s={16} w={1.2} /></Cell>
        <Cell $w={18} $ml={7}><Icon name="gear" s={17} w={1.2} /></Cell>
        <Cell $w={18} $ml={7}><Icon name="full" s={15} w={1.3} /></Cell>
        <Cell $w={19} $ml={7}><Icon name="camera" s={17} w={1.2} /></Cell>
        <Pill $w={38} $ml={7}>Trade</Pill><Pill $w={47} $ml={5} $light>Publish</Pill><Cell $w={3} />
      </Toolbar>
      <HRule $h={2} />
      <Body>
        <Rail>
          <RailItem $h={24}><RailOn><Icon name="cross" s={17} w={1.2} c="#ddd" /></RailOn></RailItem>
          {["line", "fib", "xabcd", "forecast", "rect", "text", "smile"].map(k => <RailItem key={k}><Icon name={k} s={18} /></RailItem>)}
          <RailRule $m="4.9px 0 3.5px" />
          <RailItem><Icon name="ruler" s={18} /></RailItem><RailItem><Icon name="zoomin" s={18} /></RailItem>
          <RailRule $m="4px 0 5px" />
          {["magnet", "pencillock", "lock", "eye"].map(k => <RailItem key={k} $h={25}><Icon name={k} s={18} /></RailItem>)}
          <RailRule $m="4px 0 4px" />
          <RailItem><Icon name="trash" s={17} /></RailItem>
          <Spacer />
          <RailItem $h={46}><RailOn $bg="#f1f1f1"><Icon name="star" s={16} c="#333" w={1.2} /></RailOn></RailItem>
        </Rail>
        <VRule />
        <Center>
          <PlotRow>
            <Plot>
              <Chart />
              <Legend>
                <Gold /><Title>Gold (XAUUSD) · 30 · Capital.com</Title>
                <Status><i />=</Status>
                <Ohlc $w={44.5}><b>O</b>4,487.36</Ohlc><Ohlc $w={44}><b>H</b>4,490.86</Ohlc><Ohlc $w={42.5}><b>L</b>4,482.17</Ohlc>
                <Ohlc $w={43}><b>C</b>4,483.43</Ohlc><Ohlc $w={70}>−4.01 (−0.09%)</Ohlc>
              </Legend>
              <Quote>
                <QuoteBox $c="#cc2744">4,483.17<small>SELL</small></QuoteBox><Spread>0.30</Spread><QuoteBox $c="#3355d8">4,483.47<small>BUY</small></QuoteBox>
              </Quote>
              <Favs>
                <FavCell $w={16}><GripDots>{Array.from({ length: 6 }, (_, i) => <i key={i} />)}</GripDots></FavCell>
                {FAVS.map((k, i) => <FavCell key={i}><Icon name={k} s={18} w={1.05} c="#c6c6c6" /></FavCell>)}
                <FavCell><FlagMeasure /></FavCell>
              </Favs>
              <EntryNote>4.70%</EntryNote>
              <Brand>
                <Glyph width="20" height="11" viewBox="0 0 20 11"><path d="M0 0h9v10H4.5V4.5H0zM15 0h5l-4.3 10h-5z" fill="#dcdcdc" /><circle cx="11.8" cy="2.2" r="2.2" fill="#dcdcdc" /></Glyph>
                TradingView
              </Brand>
            </Plot>
            <PriceAxis>
              {PRICES.map(p => <Tick key={p}>{p === 4465 ? "" : money(p)}</Tick>)}
              <Currency>USD<Icon name="chev" s={11} w={2} /></Currency>
              <PriceTag $y={58} $bg="#73757f">4,465.81</PriceTag>
              <PriceTag $y={189} $bg="#e0183f">4,441.01</PriceTag>
              <PriceTag $y={312} $h={17} $bg="#3a3c47">4,417.22</PriceTag>
              <PriceTag $y={517} $bg="#e2e2e2" $c="#222" $fw={500}>4,378.59</PriceTag>
              <AddMark><Icon name="circplus" s={16} w={1.2} c="#ddd" /></AddMark>
            </PriceAxis>
          </PlotRow>
          <TimeAxis>
            <TimeTrack>
              {TIMES.map(([x, t, b]) => <TimeTick key={x} $x={x} $b={b}>{t}</TimeTick>)}
              <TimeTag><span>Wed 07 Jan '26</span><span>04:00</span></TimeTag>
            </TimeTrack>
            <AxisGear><Icon name="gear" s={13} w={1.5} /></AxisGear>
          </TimeAxis>
          <HRule $c="#303030" />
          <RangeRow>
            {RANGES.map(([t, w]) => <Cell key={t} $w={w} $fs={9.5} $ls={-0.5}>{t}</Cell>)}
            <Bar $ml={3} $h={14} /><Cell $w={31}><Icon name="goto" s={16} w={1.2} /></Cell>
            <Spacer /><Text $fw={500} $fs={9.5} $ls={-0.2}>15:10:56 UTC</Text>
          </RangeRow>
          <HRule $h={3} />
          <PanelRow>
            <PanelTab>Trading Panel</PanelTab><Spacer />
            <Cell $w={24}><Icon name="up" s={17} /></Cell><Cell $w={23}><Icon name="square" s={15} w={1.3} /></Cell>
          </PanelRow>
        </Center>
        <VRule />
        <Side>
          <SideHead>
            <ListName>Wat...</ListName><Cell $w={18}><Icon name="chev" s={15} w={1.3} /></Cell>
            <Cell $w={22} $ml={1}><Icon name="plus" s={15} w={1.2} /></Cell><Cell $w={24} $ml={3}><Icon name="table" s={16} w={1.2} /></Cell>
            <Cell $w={26}><Icon name="dots" s={14} w={1.4} /></Cell>
          </SideHead>
          <Cols><FlagMark $c="#5c5c5c" /><span>Syn</span><Clip $w={14} $ml={22} $c="#8c8c8c">Las</Clip><Clip $w={12} $ml={12} $c="#8c8c8c">Ch</Clip><Clip $w={24} $ml={15} $c="#8c8c8c" $a="right">Chg%</Clip></Cols>
          {ROWS.map((r, i) => {
            const c = r[8] ? UP : DOWN;
            return (
              <Row key={i} $on={i === 12}>
                <FlagMark $c={r[0] ? "#e8445c" : "transparent"} />
                <Coin kind={r[1]} />
                <Clip $w={8} $ml={3}>{r[3] ? <Delay>D</Delay> : r[2]}</Clip>
                <Clip $w={20.5} $ml={4} $c={r[9]}>{r[4]}<Tail $c={r[10]}>{r[5]}</Tail></Clip>
                <Clip $w={19} $ml={5} $c={c}>{r[6]}</Clip>
                <Clip $w={34} $ml={6.5} $c={c} $a="right">{r[7]}</Clip>
              </Row>
            );
          })}
          <Spacer />
          <HRule $h={2} />
          <Detail>
            <Line $h={23} $gap={0}><Gold s={16} /><DetailSymbol>G.</DetailSymbol>
              <Cell $w={24} $ml={11.5}><Icon name="grid" s={16} w={1.2} /></Cell><Cell $w={27}><Icon name="edit" s={16} w={1.2} /></Cell><Cell $w={23}><Icon name="dots" s={14} w={1.4} /></Cell></Line>
            <Line $h={26} $fw={600} $fs={8.7} $ls={-0.45}>Gold (XAUUSD) <Icon name="ext2" s={10} w={1.5} c="#888" /> •</Line>
            <Line $h={8} $fs={8.5} $ls={-0.55} $fw={600} $mt={-2}>CAPITALCOM</Line>
            <Line $h={20} $fs={8.7} $c="#858585" $ls={-0.1}>Commodity • Cfd</Line>
            <Line $h={34} $fs={20} $fw={700} $ls={-0.15} $c="#e2e2e2"><span>4,483.1<Text $c={UP} $fs={20}>7</Text></span><Unit>USD</Unit></Line>
            <Line $h={8} $fs={10.3} $fw={600} $c={UP} $ls={0.05}>+34.31&nbsp; +0.77%</Line>
            <Line $h={20} $fs={9} $c={UP} $ls={-0.15}><OpenDot />Market open</Line>
            <News>
              <Glyph width="5" height="8" viewBox="0 0 5 8"><path d="M3 0L0 4.5h2L1.5 8 5 3.3H3z" fill="#7f62c6" /></Glyph>
              <p>44 minutes ago -<br />Gold Higher on...</p><Icon name="right" s={14} w={1.5} />
            </News>
            <Line $h={24} $mt={8} $fw={600} $fs={9} $ls={-0.3}>Seasonals</Line>
            <Glyph width="113" height="19" viewBox="0 0 113 19">
              <path d="M4.5 0v19M35 0v19M65.5 0v19M95.5 0v19" stroke="#555" strokeDasharray="5 4" />
              <path d="M78 19l2-4 2 4M97 19l2-5 1 2 3-11 2 12 1 2" fill="none" stroke="#26a65b" strokeWidth="1.3" />
            </Glyph>
          </Detail>
          <Handle><Icon name="right" s={9} w={2} /></Handle>
        </Side>
        <RightRail>
          <RailBtn $on $h={25} $mt={2}><Icon name="list" s={19} w={1.1} c="#ddd" /></RailBtn>
          <RailBtn $mt={5}><Icon name="alarm" s={19} w={1.1} /></RailBtn>
          <RailBtn $mt={7}><Icon name="layers" s={18} w={1.1} /></RailBtn>
          <RailBtn $mt={6}><Icon name="chat" s={19} w={1.1} /><Badge $r={-1} $t={0}>1</Badge></RailBtn>
          <Spacer />
          {["target", "idea", "cal", "rss", "bell"].map(k => <RailBtn key={k} $h={30}><Icon name={k} s={19} w={1.1} /></RailBtn>)}
          <RailBtn $h={31}><Apps>{Array.from({ length: 9 }, (_, i) => <i key={i} />)}</Apps></RailBtn>
          <RailRule $m="3px 0 7px" />
          <RailBtn $h={25}><Icon name="help" s={20} w={1.1} /></RailBtn>
          <Cell $w={1} $h={2} />
        </RightRail>
      </Body>
      <Taskbar>
        <Weather>
          <Glyph width="16" height="16" viewBox="0 0 16 16"><path d="M13 3a7 7 0 1 1-11 8c6 2 10-2 8-8z" fill="#f0a22e" /><path d="M1 8c0-3 2-3 3-3 1-3 6-2 5 1 2 0 2 3 0 3H2z" fill="#b4c6ea" /></Glyph>
          <div>23°C<br />Mostly clear</div>
        </Weather>
        <Cell $w={24}><Glyph width="17" height="17" viewBox="0 0 17 17"><path d="M1 1h7v7H1zM9 1h7v7H9zM1 9h7v7H1zM9 9h7v7H9z" fill="#1583cf" /></Glyph></Cell>
        <TaskSearch><Icon name="search" s={13} w={2} c="#333" />Search</TaskSearch>
        {APPS.map(([k, uw, bg, u], i) => (
          <AppSlot key={i} $uw={uw} $u={u || (uw ? "#8a8288" : "")}><AppTile $bg={bg}><Glyph width="17" height="17" viewBox="0 0 18 18">{APP_ART[k]}</Glyph></AppTile></AppSlot>
        ))}
        <Spacer />
        <Tray $w={22}><Icon name="up" s={11} w={2} c="#444" /></Tray>
        <Tray $w={21}><Glyph width="12" height="12" viewBox="0 0 12 12"><path d="M1 2h4v3H1zM7 1h4v4H7zM7 7h4v4H7z" fill="#3a2530" /><rect y="5" width="6" height="7" fill="#c21f3a" /></Glyph></Tray>
        <Tray $w={22}><Glyph width="13" height="10" viewBox="0 0 13 10"><path d="M2 9C-1 7 1 4 3 4c1-4 6-4 7 0 3 0 4 4 1 5z" fill="#2d8add" /><path d="M1 1l11 8" stroke="#dff" strokeWidth="1" /></Glyph></Tray>
        <Tray $w={21}><Glyph width="13" height="13" viewBox="0 0 13 13"><path d="M2 6a4.5 4.5 0 0 1 8-3M11 1v3H8M2 8.5V11h3" fill="none" stroke="#444" strokeWidth="1.4" /><circle cx="9.5" cy="9.5" r="2.8" fill="#2378c4" /></Glyph></Tray>
        <Tray $w={21}><Glyph width="10" height="13" viewBox="0 0 10 13"><path d="M3.5 2.5a1.5 1.5 0 0 1 3 0v4a1.5 1.5 0 0 1-3 0zM1.5 6c0 5 7 5 7 0M5 9.5V12" fill="none" stroke="#c23a50" strokeWidth="1.2" /></Glyph></Tray>
        <Tray $w={30}>ENG</Tray>
        <Tray $w={20}><Glyph width="10" height="10" viewBox="0 0 10 10"><path d="M1 4c2.500-2.500 5.500-2.500 8 0M3 6.200c1.300-1 2.700-1 4 0" fill="none" stroke="#555" strokeWidth="1.2" /><circle cx="5" cy="8.3" r="1" fill="#555" /></Glyph></Tray>
        <Tray $w={15}><Glyph width="13" height="11" viewBox="0 0 13 11"><path d="M1 4h2l3-3v9L3 7H1zM8 3.5c1 1 1 3 0 4M10 2c2 2 2 5 0 7" fill="none" stroke="#555" strokeWidth="1.1" /></Glyph></Tray>
        <ClockBox>7:10 PM<br />1/6/2026</ClockBox>
      </Taskbar>
    </Window>
  );
}
